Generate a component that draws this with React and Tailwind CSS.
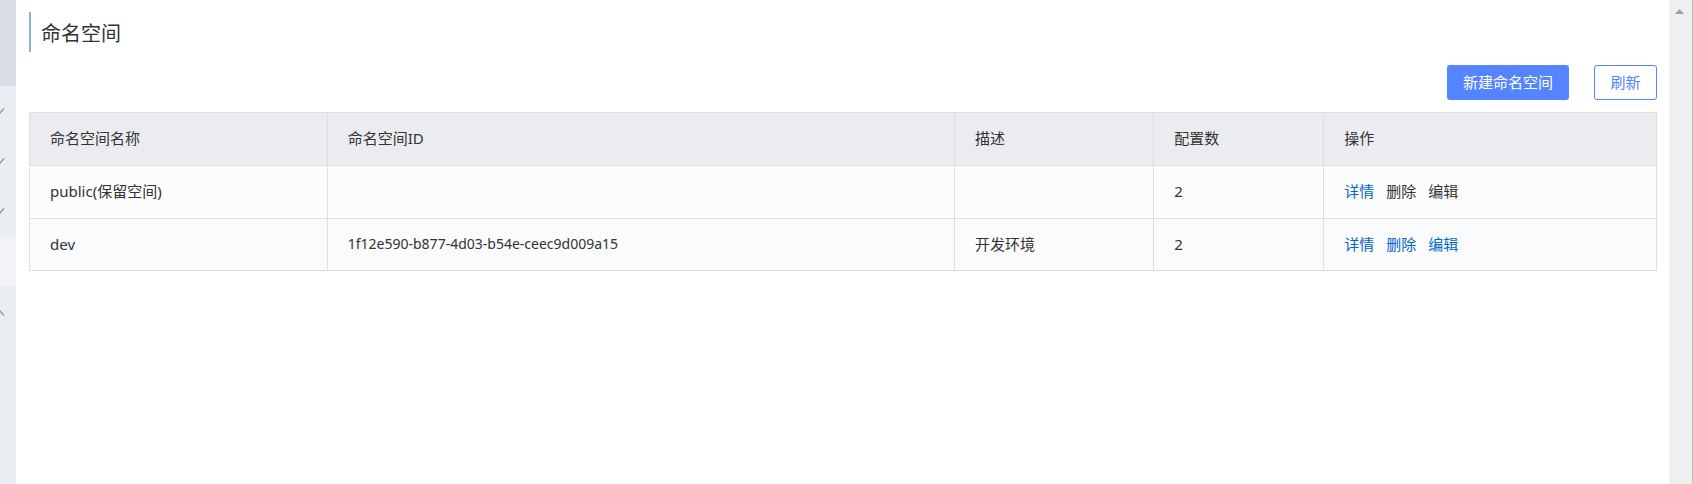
const menuRows = [
  { label: '配置管理', mark: 'down' },
  { label: '服务管理', mark: 'down' },
  { label: '权限控制', mark: 'down' },
  { label: '命名空间', mark: null, active: true },
  { label: '集群管理', mark: 'up' },
];

const spaces = [
  { name: 'public(保留空间)', id: '', desc: '', count: 2, reserved: true, bg: 'h-[53px] bg-[#fcfcfc]' },
  { name: 'dev', id: '1f12e590-b877-4d03-b54e-ceec9d009a15', desc: '开发环境', count: 2, reserved: false, bg: 'h-[52px] bg-[#fafbfd]' },
];

function MenuMark({ kind }) {
  return (
    <svg className="h-2.5 w-4" viewBox="0 0 16 10" fill="none" stroke="#8d9299" strokeWidth="1.2" aria-hidden="true">
      {kind === 'down' ? <path d="M-4 2.5L0 7L4 2.5" /> : <path d="M-4 9.5L0 5L4 9.5" />}
    </svg>
  );
}

function Sidebar() {
  return (
    <aside className="w-4 shrink-0 overflow-hidden bg-[#eaedf2]">
      <div className="h-[86px] bg-[#d9dde4]" />
      <nav>
        {menuRows.map((row) => (
          <a
            key={row.label}
            href="#"
            aria-label={row.label}
            className={row.active ? 'flex h-[50px] items-center bg-[#f1f3f7]' : 'flex h-[50px] items-center'}
          >
            {row.mark && <MenuMark kind={row.mark} />}
          </a>
        ))}
      </nav>
    </aside>
  );
}

function Action({ children, disabled }) {
  return disabled ? (
    <span className="cursor-not-allowed text-[#333333]">{children}</span>
  ) : (
    <a href="#" className="text-[#0066cc]">{children}</a>
  );
}

const cell = 'border border-[#dcdee3] px-5 pb-0.5 text-left font-normal';

export default function App() {
  return (
    <div className="flex min-h-screen bg-white font-['Noto_Sans','Noto_Sans_CJK_SC',sans-serif] text-[15px] leading-5 text-[#333333]">
      <Sidebar />
      <main className="min-w-0 flex-1 pt-3 pr-3 pl-[13px]">
        <h1 className="flex h-10 items-center border-l-2 border-[#86b5dd] pt-1 pl-2.5 text-[20px]">命名空间</h1>
        <div className="mt-[13px] mb-3 flex justify-end gap-[25px]">
          <button type="button" className="h-[35px] rounded-[3px] bg-[#5584ff] px-4 pb-0.5 text-white">
            新建命名空间
          </button>
          <button type="button" className="h-[35px] w-[63px] rounded-[3px] border border-[#5584ff] bg-white pb-0.5 text-[#5584ff]">
            刷新
          </button>
        </div>
        <table className="w-full table-fixed border-collapse">
          <colgroup>
            <col className="w-[18.3%]" />
            <col className="w-[38.55%]" />
            <col className="w-[12.25%]" />
            <col className="w-[10.45%]" />
            <col className="w-[20.45%]" />
          </colgroup>
          <thead className="bg-[#ebecf0]">
            <tr className="h-[53px]">
              <th scope="col" className={cell}>命名空间名称</th>
              <th scope="col" className={cell}>命名空间ID</th>
              <th scope="col" className={cell}>描述</th>
              <th scope="col" className={cell}>配置数</th>
              <th scope="col" className={cell}>操作</th>
            </tr>
          </thead>
          <tbody>
            {spaces.map((space) => (
              <tr key={space.name} className={space.bg}>
                <td className={cell}>{space.name}</td>
                <td className={cell}>
                  <span className="text-[14px]">{space.id}</span>
                </td>
                <td className={cell}>{space.desc}</td>
                <td className={cell}>{space.count}</td>
                <td className={cell}>
                  <div className="flex gap-3">
                    <Action>详情</Action>
                    <Action disabled={space.reserved}>删除</Action>
                    <Action disabled={space.reserved}>编辑</Action>
                  </div>
                </td>
              </tr>
            ))}
          </tbody>
        </table>
      </main>
      <div className="flex w-6 shrink-0 justify-center border-r border-[#bcbcbc] bg-[#f0f0f0] pt-[9px] pr-0.5">
        <svg className="h-[5px] w-[9px]" viewBox="0 0 9 5" fill="#a0a0a0" aria-hidden="true">
          <path d="M4.5 0L9 5H0Z" />
        </svg>
      </div>
    </div>
  );
}
